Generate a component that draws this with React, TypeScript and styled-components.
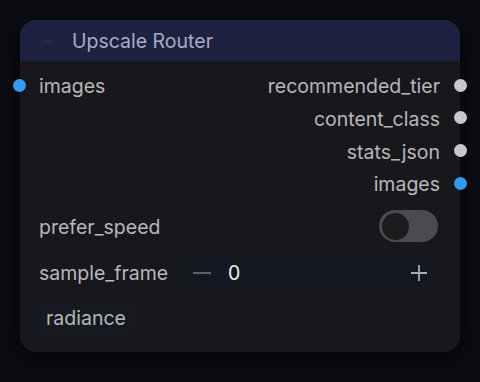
import React from "react";
import styled, { createGlobalStyle } from "styled-components";

const Global = createGlobalStyle`
  html, body { margin: 0; padding: 0; background: #0b0c10; }
  body { width: 480px; height: 382px; overflow: hidden; font-family: Inter, "Noto Sans", sans-serif; }
  #root { padding: 20px 20px 0 20px; }
`;

const Node = styled.div`
  width: 440px;
  height: 332px;
  box-sizing: border-box;
  background: #18171b;
  border-radius: 16px;
  box-shadow: 0 6px 18px rgba(0, 0, 0, 0.55);
  position: relative;
  display: flex;
  flex-direction: column;
`;

const Header = styled.div`
  height: 45.5px;
  background: #1d2240;
  border-radius: 16px 16px 0 0;
  display: flex;
  align-items: center;
  padding-left: 22px;
  gap: 18px;
  color: #a7adc4;
  font-size: 19.5px;
`;

const Body = styled.div`
  padding: 8.5px 0 17px 0;
  display: flex;
  flex-direction: column;
`;

const SlotRow = styled.div`
  height: 32.67px;
  display: flex;
  align-items: center;
  justify-content: space-between;
  position: relative;
  padding: 0 20px 0 19px;
  color: #b7b7bb;
  font-size: 19.5px;
`;

const Label = styled.span<{ $right?: boolean }>`
  margin-left: ${(p) => (p.$right ? "auto" : "0")};
`;

const Dot = styled.span<{ $color: string; $side: "left" | "right" }>`
  position: absolute;
  top: 50%;
  ${(p) => p.$side}: -7px;
  width: 13px;
  height: 13px;
  margin-top: -7.5px;
  border-radius: 50%;
  background: ${(p) => p.$color};
`;

const Widgets = styled.div`
  margin-top: 7.5px;
  padding: 0 21px 0 13px;
  display: flex;
  flex-direction: column;
  gap: 9.5px;
`;

const WidgetRow = styled.div`
  height: 36px;
  display: flex;
  align-items: center;
  justify-content: space-between;
  color: #b7b7bb;
  font-size: 19.5px;
`;

const WLabel = styled.span`
  padding-left: 6px;
  padding-top: 2px;
`;

const Toggle = styled.div`
  width: 59px;
  height: 32px;
  border-radius: 16px;
  background: #4a4b4f;
  display: flex;
  align-items: center;
  padding-left: 3px;
  box-sizing: border-box;
  margin-right: 1px;
`;

const Knob = styled.div`
  width: 27px;
  height: 27px;
  border-radius: 50%;
  background: #1c1b1e;
`;

const NumberBox = styled.div`
  width: 257px;
  height: 36px;
  border-radius: 6px;
  background: #131720;
  display: flex;
  align-items: center;
  box-sizing: border-box;
  padding: 2px 10px 0 10px;
  color: #f0f0f0;
`;

const StepBtn = styled.span`
  width: 20px;
  display: flex;
  align-items: center;
  justify-content: center;
`;

const Value = styled.span`
  flex: 1;
  padding-left: 16px;
  font-size: 19.5px;
`;

const Chip = styled.div`
  align-self: flex-start;
  height: 36px;
  display: flex;
  align-items: center;
  padding: 2px 13px 0 13px;
  box-sizing: border-box;
  border-radius: 8px;
  background: #16191f;
  color: #b7b7bb;
  font-size: 19.5px;
`;

const slotsLeft = ["images"];
const slotsRight = [
  { name: "recommended_tier", color: "#c8c8ca" },
  { name: "content_class", color: "#c8c8ca" },
  { name: "stats_json", color: "#c8c8ca" },
  { name: "images", color: "#2f9bf2" },
];

export default function App() {
  return (
    <>
      <Global />
      <Node>
        <Header>
          <svg width="12" height="12" viewBox="0 0 12 12">
            <path d="M2 4 L6 8 L10 4" stroke="#252b48" strokeWidth="1.6" fill="none" />
          </svg>
          <span>Upscale Router</span>
        </Header>
        <Body>
          {slotsRight.map((s, i) => (
            <SlotRow key={s.name + i}>
              {i === 0 && (
                <>
                  <Dot $side="left" $color="#2f9bf2" />
                  <Label>{slotsLeft[0]}</Label>
                </>
              )}
              <Label $right>{s.name}</Label>
              <Dot $side="right" $color={s.color} />
            </SlotRow>
          ))}
          <Widgets>
            <WidgetRow>
              <WLabel>prefer_speed</WLabel>
              <Toggle>
                <Knob />
              </Toggle>
            </WidgetRow>
            <WidgetRow>
              <WLabel>sample_frame</WLabel>
              <NumberBox>
                <StepBtn>
                  <svg width="20" height="4" viewBox="0 0 20 4">
                    <path d="M1 2 H19" stroke="#5d6068" strokeWidth="2" />
                  </svg>
                </StepBtn>
                <Value>0</Value>
                <StepBtn>
                  <svg width="18" height="18" viewBox="0 0 18 18">
                    <path d="M9 1 V17 M1 9 H17" stroke="#a9abb0" strokeWidth="1.8" />
                  </svg>
                </StepBtn>
              </NumberBox>
            </WidgetRow>
            <Chip>radiance</Chip>
          </Widgets>
        </Body>
      </Node>
    </>
  );
}
